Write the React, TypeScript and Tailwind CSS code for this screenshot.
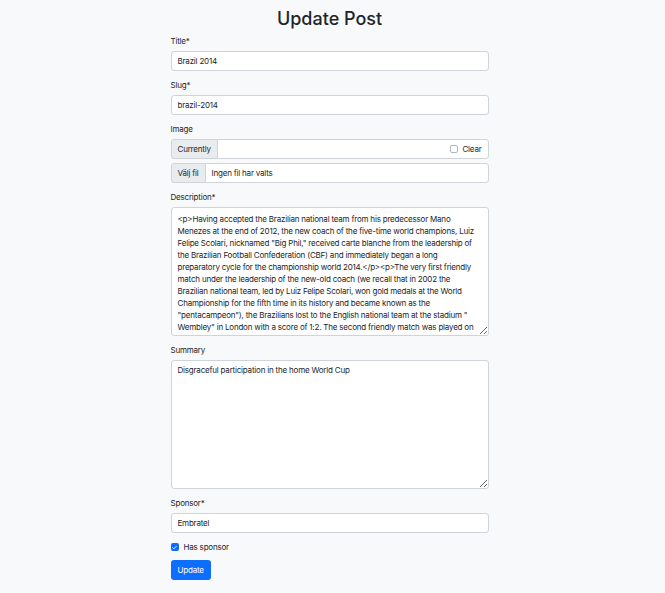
import React from 'react';

const description =
  '<p>Having accepted the Brazilian national team from his predecessor Mano Menezes at the end of 2012, the new coach of the five-time world champions, Luiz Felipe Scolari, nicknamed "Big Phil," received carte blanche from the leadership of the Brazilian Football Confederation (CBF) and immediately began a long preparatory cycle for the championship world 2014.</p><p>The very first friendly match under the leadership of the new-old coach (we recall that in 2002 the Brazilian national team, led by Luiz Felipe Scolari, won gold medals at the World Championship for the fifth time in its history and became known as the "pentacampeon"), the Brazilians lost to the English national team at the stadium " Wembley" in London with a score of 1:2. The second friendly match was played on April 2, 2013 in Rio de Janeiro against Bolivia.</p>';

const inputCls =
  'block w-full rounded-[3px] border border-[#ced4da] bg-white px-[6px] py-[3px] text-[8px] leading-[12px] tracking-[-0.2px] text-[#212529] outline-none';

const Label: React.FC<{ children: React.ReactNode }> = ({ children }) => (
  <label className="mb-[4px] block text-[8px] leading-[12px] tracking-[-0.2px] text-[#212529]">{children}</label>
);

const App: React.FC = () => {
  return (
    <div className="min-h-[593px] bg-[#f8f9fa] pr-[6px] font-['Inter',sans-serif] text-[#212529]">
      <div className="mx-auto w-[318px] pt-[7px]">
        <h1 className="mb-[4px] text-center text-[18px] font-medium leading-[24px]">Update Post</h1>

        <div className="mb-[8px]">
          <Label>Title*</Label>
          <input className={inputCls} defaultValue="Brazil 2014" />
        </div>

        <div className="mb-[8px]">
          <Label>Slug*</Label>
          <input className={inputCls} defaultValue="brazil-2014" />
        </div>

        <div className="mb-[8px]">
          <Label>Image</Label>
          <div className="mb-[4px] flex text-[8px] leading-[12px] tracking-[-0.2px]">
            <span className="rounded-l-[3px] border border-[#ced4da] bg-[#e9ecef] px-[6px] py-[3px]">Currently</span>
            <div className="-ml-px flex flex-1 items-center justify-end rounded-r-[3px] border border-[#ced4da] bg-white px-[6px] py-[3px]">
              <span className="mr-[4px] inline-block h-[8px] w-[8px] rounded-[2px] border border-[#adb5bd] bg-white" />
              <span>Clear</span>
            </div>
          </div>
          <div className="flex text-[8px] leading-[12px] tracking-[-0.2px]">
            <span className="rounded-l-[3px] border border-[#ced4da] bg-[#e9ecef] px-[6px] py-[3px]">Välj fil</span>
            <div className="-ml-px flex-1 rounded-r-[3px] border border-[#ced4da] bg-white px-[6px] py-[3px]">
              Ingen fil har valts
            </div>
          </div>
        </div>

        <div className="mb-[8px]">
          <Label>Description*</Label>
          <textarea
            className={`${inputCls} h-[129px] resize-y overflow-hidden pt-[5px]`}
            defaultValue={description}
          />
        </div>

        <div className="mb-[8px]">
          <Label>Summary</Label>
          <textarea
            className={`${inputCls} h-[129px] resize-y overflow-hidden`}
            defaultValue="Disgraceful participation in the home World Cup"
          />
        </div>

        <div className="mb-[8px]">
          <Label>Sponsor*</Label>
          <input className={inputCls} defaultValue="Embratel" />
        </div>

        <div className="mb-[7px] flex items-center text-[8px] leading-[12px] tracking-[-0.2px]">
          <span className="mr-[5px] flex h-[8px] w-[8px] items-center justify-center rounded-[2px] bg-[#0d6efd]">
            <svg viewBox="0 0 16 16" className="h-[7px] w-[7px]">
              <path d="M4 8.5l2.5 2.5L12 5.5" fill="none" stroke="white" strokeWidth="2.2" strokeLinecap="round" strokeLinejoin="round" />
            </svg>
          </span>
          <span>Has sponsor</span>
        </div>

        <button className="block rounded-[3px] bg-[#0d6efd] px-[7px] py-[4px] text-[8px] leading-[12px] tracking-[-0.2px] text-white">
          Update
        </button>
      </div>
    </div>
  );
};

export default App;
